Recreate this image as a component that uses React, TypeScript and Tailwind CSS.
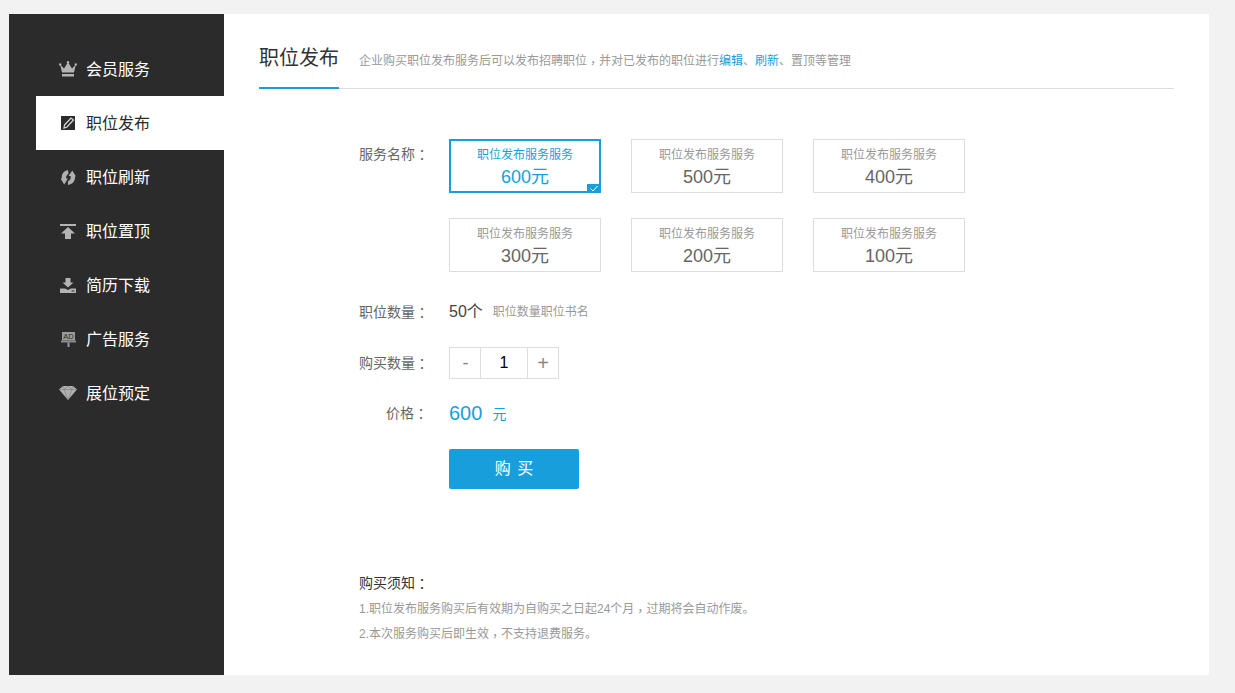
import { ReactNode } from 'react';

function Crown() {
  return (
    <svg width="18" height="16" viewBox="0 0 18 16" fill="#b4b4b4">
      <circle cx="1.200" cy="3.500" r="1.200" />
      <circle cx="9" cy="1.200" r="1.200" />
      <circle cx="16.800" cy="3.500" r="1.200" />
      <path d="M1.200 3.500 5 7.500 9 1.200 13 7.500 16.800 3.500 15 11.500H3Z" />
      <rect x="3" y="13" width="12" height="2.500" />
    </svg>
  );
}

function EditIcon() {
  return (
    <svg width="14" height="14" viewBox="0 0 14 14">
      <rect width="14" height="14" fill="#2b2b2b" />
      <path d="M3.500 9 10 2 12.500 4 6 11 3 12Z" fill="none" stroke="#d8d8d8" strokeWidth="1.200" />
    </svg>
  );
}

function RefreshIcon() {
  const half = 'M7.500 0C2.500 1 0.500 4.500 1 8H0L3.500 13.500 7 8.500H5C4.800 6 5.500 4.500 7.500 3.500Z';
  return (
    <svg width="15" height="15" viewBox="0 0 14 14" fill="#b0b0b0">
      <path d="M6.500 0C2 1 0.300 4.500 0.800 7.800H-0.500L3 13.500 6.500 8H4.800C4.600 5.800 5.500 4.500 7 3.500Z" />
      <path d={half} transform="rotate(180 7 7)" />
    </svg>
  );
}

function TopIcon() {
  return (
    <svg width="16" height="15" viewBox="0 0 16 15" fill="#b4b4b4">
      <rect width="16" height="2" />
      <path d="M8 3 15 9.500H11V15H5V9.500H1Z" />
    </svg>
  );
}

function DownloadIcon() {
  return (
    <svg width="16" height="15" viewBox="0 0 16 15" fill="#b4b4b4">
      <path d="M5.500 0H10.500V4.500H13.500L8 9.500 2.500 4.500H5.500Z" />
      <path d="M0 10.500H5L8 12 11 10.500H16V15H0Z" />
      <rect x="11.500" y="12.500" width="3" height="1" fill="#2b2b2b" />
    </svg>
  );
}

function AdIcon() {
  return (
    <svg width="15" height="15" viewBox="0 0 15 15">
      <rect x="1" y="0" width="13" height="8.500" fill="#9a9a9a" />
      <rect y="8.500" width="15" height="2" fill="#8c8c8c" />
      <rect x="6.500" y="10.500" width="2" height="4.500" fill="#9a9a9a" />
      <text x="7.500" y="7.200" textAnchor="middle" fontSize="7.500" fill="#2b2b2b" fontFamily="Liberation Sans">AD</text>
    </svg>
  );
}

function DiamondIcon() {
  return (
    <svg width="18" height="14" viewBox="0 0 18 14" fill="#b0b0b0">
      <path d="M4 0H14L18 3.500 9 14 0 3.500Z" />
      <path d="M0 3.500H18M5 3.500 9 14 13 3.500M4 0 5.500 3.500 9 0 12.500 3.500 14 0" fill="none" stroke="#7c7c7c" strokeWidth="0.600" />
    </svg>
  );
}

const menu: { label: string; icon: ReactNode }[] = [
  { label: '会员服务', icon: <Crown /> },
  { label: '职位发布', icon: <EditIcon /> },
  { label: '职位刷新', icon: <RefreshIcon /> },
  { label: '职位置顶', icon: <TopIcon /> },
  { label: '简历下载', icon: <DownloadIcon /> },
  { label: '广告服务', icon: <AdIcon /> },
  { label: '展位预定', icon: <DiamondIcon /> },
];

const prices = [600, 500, 400, 300, 200, 100];

// the TC face centres full-width punctuation in its cell, like the reference
function Colon() {
  return <span className="relative top-[1px] font-['Noto_Sans_CJK_TC',sans-serif]">：</span>;
}

function Comma() {
  return <span className="relative top-[3px] font-['Noto_Sans_CJK_TC',sans-serif]">，</span>;
}

function Sidebar() {
  return (
    <aside className="w-[215px] shrink-0 bg-[#2b2b2b] pt-[28px] pl-[27px]">
      {menu.map((item, i) => (
        <div
          key={item.label}
          className={`flex h-[54px] items-center text-[16px] ${i === 1 ? 'bg-white text-[#2b2b2b]' : 'text-white'}`}
        >
          <span className="flex w-[50px] justify-center pl-[14px]">{item.icon}</span>
          <span className="pt-[2px]">{item.label}</span>
        </div>
      ))}
    </aside>
  );
}

function PriceCard({ price, active }: { price: number; active: boolean }) {
  return (
    <div
      className={`relative flex h-[54px] w-[152px] flex-col items-center justify-center pt-[4px] ${
        active ? 'border-2 border-[#189fdb] text-[#189fdb]' : 'border border-[#dddddd] text-[#666666]'
      }`}
    >
      <p className={`text-[12px] leading-[18px] ${active ? '' : 'text-[#999999]'}`}>职位发布服务服务</p>
      <p className="text-[18px] leading-[26px]">{price}元</p>
      {active && (
        <span className="absolute right-[-2px] bottom-[-2px] flex h-[9px] w-[14px] items-center justify-center bg-[#189fdb]">
          <svg width="10" height="7" viewBox="0 0 10 7" fill="none" stroke="#ffffff" strokeWidth="1">
            <path d="M1.500 3.500 4 6 8.500 1" />
          </svg>
        </span>
      )}
    </div>
  );
}

function Label({ children }: { children: ReactNode }) {
  return (
    <span className="w-[90px] shrink-0 pr-[21px] text-right text-[14px] whitespace-nowrap text-[#666666]">
      {children}
      <Colon />
    </span>
  );
}

export default function App() {
  return (
    <div className="h-[693px] bg-[#f2f2f2] pt-[14px] pb-[18px] pl-[9px] pr-[26px] font-['Liberation_Sans','Noto_Sans_CJK_SC',sans-serif]">
      <div className="flex h-full bg-white">
        <Sidebar />
        <main className="flex-1 px-[35px]">
          <header className="flex h-[75px] items-end border-b border-[#dddddd]">
            <h1 className="mb-[-1px] h-[45px] w-[80px] border-b-2 border-[#189fdb] text-[20px] leading-[28px] whitespace-nowrap text-[#333333]">
              职位发布
            </h1>
            <p className="ml-[20px] h-[38px] text-[12px] leading-[20px] text-[#999999]">
              企业购买职位发布服务后可以发布招聘职位<Comma />并对已发布的职位进行
              <span className="text-[#189fdb]">编辑</span>、<span className="text-[#189fdb]">刷新</span>、置顶等管理
            </p>
          </header>

          <section className="pl-[100px] pt-[50px]">
            <div className="flex">
              <span className="w-[90px] pt-[3px]">
                <Label>服务名称</Label>
              </span>
              <div className="grid grid-cols-[152px_152px_152px] gap-x-[30px] gap-y-[25px]">
                {prices.map((p, i) => (
                  <PriceCard key={p} price={p} active={i === 0} />
                ))}
              </div>
            </div>

            <div className="mt-[25px] flex h-[30px] items-center">
              <Label>职位数量</Label>
              <span className="text-[16px] text-[#444444]">50个</span>
              <span className="ml-[10px] text-[12px] text-[#999999]">职位数量职位书名</span>
            </div>

            <div className="mt-[20px] flex h-[32px] items-center">
              <Label>购买数量</Label>
              <div className="flex h-[32px] border border-[#dddddd] text-[#888888]">
                <button className="w-[31px] border-r border-[#dddddd] pl-[1px] text-[18px]">-</button>
                <span className="flex w-[47px] items-center justify-center border-r border-[#dddddd] text-[16px] text-black">1</span>
                <button className="w-[30px] text-[20px]">+</button>
              </div>
            </div>

            <div className="mt-[18px] flex h-[32px] items-center text-[#189fdb]">
              <Label>价格</Label>
              <span className="text-[20px]">600</span>
              <span className="mt-[2px] ml-[10px] text-[14px]">元</span>
            </div>

            <div className="mt-[20px] pl-[90px]">
              <button className="h-[40px] w-[130px] rounded-[2px] bg-[#189fdb] pl-[1px] text-[16px] tracking-[1px] text-white">购 买</button>
            </div>

            <div className="mt-[84px]">
              <p className="text-[14px] leading-[18px] text-[#333333]">
                购买须知<Colon />
              </p>
              <p className="mt-[7px] text-[12px] leading-[18px] text-[#999999]">
                1.职位发布服务购买后有效期为自购买之日起24个月<Comma />过期将会自动作废。
              </p>
              <p className="mt-[6px] text-[12px] leading-[18px] text-[#999999]">
                2.本次服务购买后即生效<Comma />不支持退费服务。
              </p>
            </div>
          </section>
        </main>
      </div>
    </div>
  );
}
